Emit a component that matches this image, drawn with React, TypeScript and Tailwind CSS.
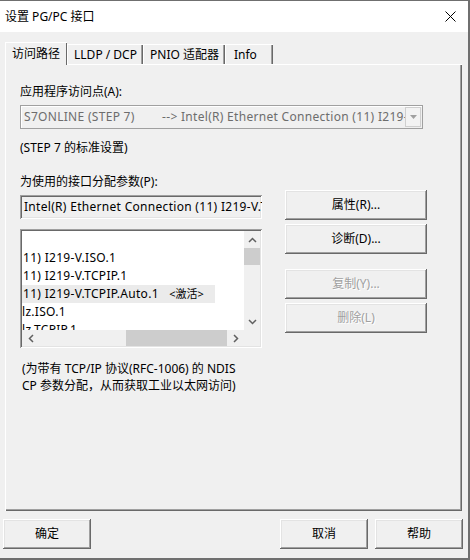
import React from "react";

const raised =
  "shadow-[inset_-1px_-1px_#696969,inset_1px_1px_#ffffff,inset_-2px_-2px_#a0a0a0,inset_2px_2px_#e3e3e3]";
const sunken =
  "shadow-[inset_1px_1px_#a0a0a0,inset_-1px_-1px_#ffffff,inset_2px_2px_#696969,inset_-2px_-2px_#e3e3e3]";

function Btn({
  children,
  disabled,
  className = "",
}: {
  children: React.ReactNode;
  disabled?: boolean;
  className?: string;
}) {
  return (
    <div
      className={`flex items-center justify-center bg-[#f0f0f0] text-[12px] leading-none ${raised} ${
        disabled ? "text-[#a0a0a0] [text-shadow:1px_1px_#ffffff]" : "text-black"
      } ${className}`}
    >
      {children}
    </div>
  );
}

function Tab({ label, active, w }: { label: string; active?: boolean; w: string }) {
  return (
    <div
      className={`flex items-center justify-center bg-[#f0f0f0] text-[12px] whitespace-nowrap ${w} ${
        active
          ? "h-[23px] -mb-px z-10 border-l border-t border-white shadow-[inset_-1px_0_#696969] pr-px"
          : "h-[20px] border-l border-t border-white shadow-[inset_-1px_0_#696969,inset_-2px_0_#a0a0a0]"
      }`}
    >
      {label}
    </div>
  );
}

export default function App() {
  return (
    <div className="relative w-[470px] h-[560px] overflow-hidden bg-[#f0f0f0] font-['Noto_Sans','Noto_Sans_CJK_SC',sans-serif] text-black border-t border-r-2 border-[#6f6f6f]">
      {/* Title bar */}
      <div className="h-[31px] bg-white flex items-center justify-between pl-[5px] pr-[10px]">
        <span className="text-[12px]">设置 PG/PC 接口</span>
        <svg width="11" height="11" viewBox="0 0 11 11" className="mr-[2px]">
          <path d="M0.5 0.5 L10.5 10.5 M10.5 0.5 L0.5 10.5" stroke="#000" strokeWidth="1" />
        </svg>
      </div>

      {/* Tabs */}
      <div className="mt-[10px] ml-[5px] flex items-end h-[22px]">
        <Tab label="访问路径" active w="w-[62px]" />
        <Tab label="LLDP / DCP" w="w-[76px]" />
        <Tab label="PNIO 适配器" w="w-[82px]" />
        <Tab label="Info" w="w-[48px] justify-start pl-[8px]" />
      </div>

      {/* Panel */}
      <div className="ml-[5px] w-[457px] h-[447px] border-l border-t border-white shadow-[inset_-1px_-1px_#696969,inset_-2px_-2px_#a0a0a0] pl-[14px] pt-[19px]">
        <div className="text-[12px] leading-[16px] h-[16px]">应用程序访问点(A):</div>

        {/* Combo */}
        <div className="mt-[5px] w-[403px] h-[24px] bg-[#f0f0f0] border border-[#a0a0a0] shadow-[inset_1px_1px_#ffffff] flex items-center pl-[3px] pr-[1px]">
          <div className="flex-1 overflow-hidden whitespace-nowrap text-[12px] tracking-[0.3px] text-[#6d6d6d] leading-none">
            S7ONLINE (STEP 7)&nbsp;&nbsp;&nbsp;&nbsp;&nbsp;&nbsp;&nbsp;&nbsp;--&gt; Intel(R) Ethernet Connection (11) I219-V.TCPIP.Auto.1
          </div>
          <div className="w-[16px] h-[20px] border border-[#cfcfcf] bg-[#f3f3f3] flex items-center justify-center">
            <svg width="7" height="4" viewBox="0 0 7 4">
              <path d="M0 0 L7 0 L3.5 4 Z" fill="#a0a0a0" />
            </svg>
          </div>
        </div>

        <div className="mt-[11px] text-[12px] leading-[16px] h-[16px]">(STEP 7 的标准设置)</div>
        <div className="mt-[18px] text-[12px] leading-[16px] h-[16px]">为使用的接口分配参数(P):</div>

        <div className="flex gap-[23px]">
          {/* Left column */}
          <div className="w-[242px]">
            <div
              className={`mt-[5px] h-[24px] bg-[#f0f0f0] flex items-center pl-[4px] overflow-hidden whitespace-nowrap text-[12px] tracking-[0.3px] leading-none ${sunken}`}
            >
              Intel(R) Ethernet Connection (11) I219-V.TCPIP.Auto.1
            </div>

            {/* List box */}
            <div className={`mt-[10px] h-[119px] bg-white p-[2px] flex flex-col ${sunken}`}>
              <div className="flex flex-1 min-h-0">
                <div className="flex-1 overflow-hidden text-[12px] tracking-[0.3px] leading-[18px] whitespace-nowrap">
                  <div className="h-[18px]"></div>
                  <div className="h-[18px] pl-[1px]">11) I219-V.ISO.1</div>
                  <div className="h-[18px] pl-[1px]">11) I219-V.TCPIP.1</div>
                  <div className="h-[18px] pl-[1px] bg-[#ebebeb] w-[193px]">
                    11) I219-V.TCPIP.Auto.1&nbsp;&nbsp;&nbsp;<span className="text-[11px] tracking-normal">&lt;激活&gt;</span>
                  </div>
                  <div className="h-[18px]">lz.ISO.1</div>
                  <div className="h-[18px]">lz.TCPIP.1</div>
                </div>
                {/* vertical scrollbar */}
                <div className="w-[16px] bg-[#f0f0f0] flex flex-col">
                  <div className="h-[17px] flex items-center justify-center">
                    <svg width="9" height="6" viewBox="0 0 9 6">
                      <path d="M1 5 L4.5 1.5 L8 5" stroke="#606060" strokeWidth="1.5" fill="none" />
                    </svg>
                  </div>
                  <div className="h-[17px] bg-[#cdcdcd]"></div>
                  <div className="flex-1"></div>
                  <div className="h-[17px] flex items-center justify-center">
                    <svg width="9" height="6" viewBox="0 0 9 6">
                      <path d="M1 1 L4.5 4.5 L8 1" stroke="#606060" strokeWidth="1.5" fill="none" />
                    </svg>
                  </div>
                </div>
              </div>
              {/* horizontal scrollbar */}
              <div className="h-[16px] flex bg-[#f0f0f0]">
                <div className="w-[17px] flex items-center justify-center">
                  <svg width="6" height="9" viewBox="0 0 6 9">
                    <path d="M5 1 L1.5 4.5 L5 8" stroke="#606060" strokeWidth="1.5" fill="none" />
                  </svg>
                </div>
                <div className="ml-[87px] w-[101px] bg-[#cdcdcd]"></div>
                <div className="w-[17px] flex items-center justify-center">
                  <svg width="6" height="9" viewBox="0 0 6 9">
                    <path d="M1 1 L4.5 4.5 L1 8" stroke="#606060" strokeWidth="1.5" fill="none" />
                  </svg>
                </div>
                <div className="flex-1"></div>
                <div className="w-[16px] bg-[#f0f0f0]"></div>
              </div>
            </div>

            <div className="mt-[12px] pl-[2px] text-[12px] leading-[17px] whitespace-nowrap">
              <div>(为带有 TCP/IP 协议(RFC-1006) 的 NDIS</div>
              <div>CP 参数分配，从而获取工业以太网访问)</div>
            </div>
          </div>

          {/* Right column */}
          <div className="w-[142px] flex flex-col">
            <Btn className="h-[30px]">属性(R)...</Btn>
            <Btn className="h-[30px] mt-[4px]">诊断(D)...</Btn>
            <Btn disabled className="h-[30px] mt-[15px]">复制(Y)...</Btn>
            <Btn disabled className="h-[30px] mt-[4px]">删除(L)</Btn>
          </div>
        </div>
      </div>

      {/* Bottom buttons */}
      <div className="mt-[8px] flex pl-[3px] pr-[5px]">
        <Btn className="w-[88px] h-[30px]">确定</Btn>
        <div className="flex-1"></div>
        <Btn className="w-[88px] h-[30px]">取消</Btn>
        <Btn className="w-[88px] h-[30px] ml-[7px]">帮助</Btn>
      </div>

      <div className="absolute left-0 right-0 bottom-0 h-[2px] bg-[#6f6f6f]"></div>
    </div>
  );
}
